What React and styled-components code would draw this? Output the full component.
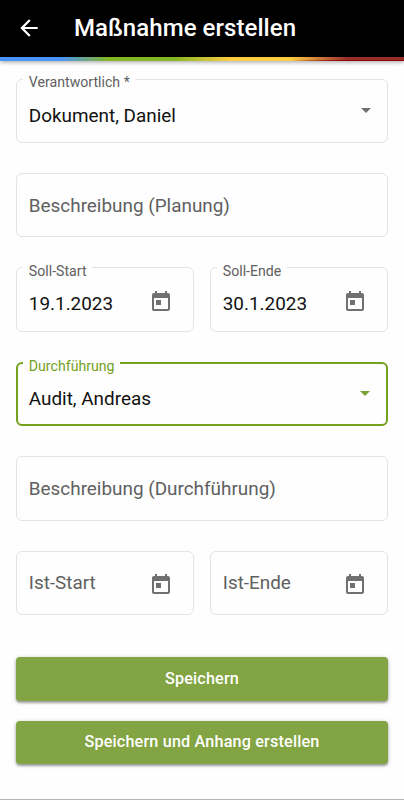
import styled, { createGlobalStyle } from "styled-components"

//#region styled
const GlobalStyle = createGlobalStyle`
  body {
    margin: 0;
    background: #fefefe;
    font-family: Roboto, sans-serif;
  }

  * {
    box-sizing: border-box;
  }
`

const Page = styled.div`
  height: 800px;
  display: flex;
  flex-direction: column;
  overflow: hidden;
  border-bottom: 1px solid #b4b4b4;
`

const Header = styled.header`
  height: 57px;
  flex-shrink: 0;
  display: flex;
  align-items: center;
  padding: 0 16px 1px;
  background: #000;
  color: #fff;
`

const BackIcon = styled.svg`
  width: 26px;
  height: 26px;
  margin-right: 32px;
  fill: currentColor;
`

const Title = styled.h1`
  margin: 0;
  font-size: 24px;
  font-weight: 500;
  line-height: 32px;
  letter-spacing: .06px;
`

const ColorBar = styled.div`
  height: 4px;
  flex-shrink: 0;
  background:
    linear-gradient(90deg, transparent 72%, #900000 86%) 0 3px / 100% 1px no-repeat,
    linear-gradient(90deg, #4a94f6 15%, #85b522 27%, #85b522 43%, #fdcd43 57%, #fdcd43 72%, #9a2c2c 86%);
  box-shadow: 0 1px 4px rgba(0, 0, 0, .4);
`

const Form = styled.form`
  display: flex;
  flex-direction: column;
  gap: 30px;
  padding: 17.6px 16.3px 0;
`

const Row = styled.div`
  display: grid;
  grid-template-columns: 1fr 1fr;
  gap: 16.5px;
`

const Field = styled.fieldset`
  height: 64.4px;
  min-width: 0;
  margin: 0;
  padding: 0;
  border: ${p => (p.$active ? "2px solid #74a01c" : "1px solid #e3e3e3")};
  border-radius: 6px;
`

const Label = styled.legend`
  height: 0;
  margin-left: ${p => (p.$active ? "5px" : "6px")};
  padding: 0 5.5px;
  font-size: 14.15px;
  line-height: 7px;
  white-space: nowrap;
  color: ${p => (p.$active ? "#74a01c" : "#606060")};
`

const Content = styled.div`
  height: ${p => (p.$active ? "60.4px" : "62.4px")};
  display: flex;
  align-items: center;
  justify-content: space-between;
  padding: ${p => (p.$labelled ? "9px" : "0")} 16px 0 ${p => (p.$active ? "10.5px" : "11.5px")};
`

const SelectContent = styled(Content)`
  padding-top: 11px;
`

const TextContent = styled(Content)`
  padding-top: 2px;
`

const Value = styled.span`
  font-size: 18.9px;
  line-height: 24px;
  white-space: nowrap;
  color: ${p => (p.$placeholder ? "#606060" : "#111")};
`

const Arrow = styled.svg`
  width: 10px;
  height: 5px;
  margin-top: -12px;
  fill: ${p => (p.$active ? "#7da236" : "#707070")};
`

const CalendarIcon = styled.svg`
  width: 24px;
  height: 24px;
  margin: ${p => (p.$labelled ? "-5px" : "4px")} 4px 0 0;
  fill: #707070;
`

const Actions = styled.div`
  display: flex;
  flex-direction: column;
  gap: 20px;
  margin-top: 12.5px;
`

const Button = styled.button`
  height: 43.3px;
  border: 0;
  border-radius: 4px;
  padding: 0 0 2px;
  background: #82a442;
  color: #fff;
  font-family: inherit;
  font-size: 16.2px;
  font-weight: 500;
  letter-spacing: .17px;
  box-shadow: 0 2px 2px rgba(0, 0, 0, .25), 0 1px 4px rgba(0, 0, 0, .25);
`
//#endregion

const SelectField = ({ label, value, active }) => (
  <Field $active={active}>
    <Label $active={active}>{label}</Label>
    <SelectContent $active={active}>
      <Value>{value}</Value>
      <Arrow $active={active} viewBox="0 0 10 5">
        <path d="M0 0h10L5 5z" />
      </Arrow>
    </SelectContent>
  </Field>
)

const TextField = ({ placeholder }) => (
  <Field>
    <TextContent>
      <Value $placeholder>{placeholder}</Value>
    </TextContent>
  </Field>
)

const DateField = ({ label, value }) => (
  <Field>
    {value && <Label>{label}</Label>}
    <Content $labelled={!!value}>
      <Value $placeholder={!value}>{value || label}</Value>
      <CalendarIcon $labelled={!!value} viewBox="0 0 24 24">
        <path d="M19 3h-1V1h-2v2H8V1H6v2H5c-1.11 0-1.99.9-1.99 2L3 19c0 1.1.89 2 2 2h14c1.1 0 2-.9 2-2V5c0-1.1-.9-2-2-2zm0 16H5V8h14v11zM7 10h5v5H7z" />
      </CalendarIcon>
    </Content>
  </Field>
)

const App = () => (
  <>
    <GlobalStyle />
    <Page>
      <Header>
        <BackIcon viewBox="0 0 24 24">
          <path d="M20 11H7.83l5.59-5.59L12 4l-8 8 8 8 1.41-1.41L7.83 13H20v-2z" />
        </BackIcon>
        <Title>Maßnahme erstellen</Title>
      </Header>
      <ColorBar />
      <Form>
        <SelectField label="Verantwortlich *" value="Dokument, Daniel" />
        <TextField placeholder="Beschreibung (Planung)" />
        <Row>
          <DateField label="Soll-Start" value="19.1.2023" />
          <DateField label="Soll-Ende" value="30.1.2023" />
        </Row>
        <SelectField label="Durchführung" value="Audit, Andreas" active />
        <TextField placeholder="Beschreibung (Durchführung)" />
        <Row>
          <DateField label="Ist-Start" />
          <DateField label="Ist-Ende" />
        </Row>
        <Actions>
          <Button type="button">Speichern</Button>
          <Button type="button">Speichern und Anhang erstellen</Button>
        </Actions>
      </Form>
    </Page>
  </>
)

export default App
